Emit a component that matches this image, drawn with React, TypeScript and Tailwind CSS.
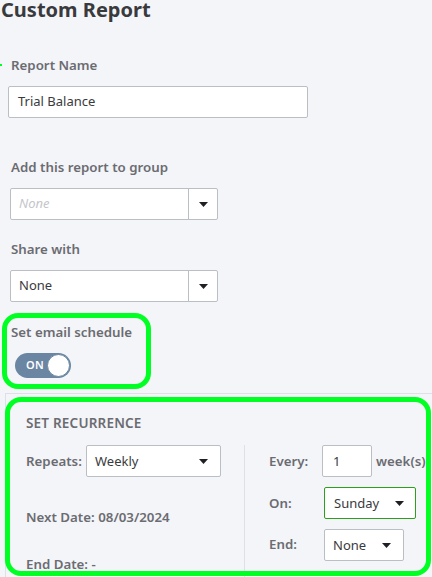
import React from "react";

const Arrow = () => (
  <svg width="9" height="5" viewBox="0 0 9 5" className="block">
    <path d="M0 0 L9 0 L4.5 5 Z" fill="#1f2024" />
  </svg>
);

const lbl = "text-[13.3px] leading-[20px] font-semibold";

export default function App() {
  return (
    <div
      className="relative w-[432px] h-[577px] overflow-hidden bg-[#f4f5f8] text-[#6b6c72]"
      style={{ fontFamily: '"Noto Sans", "Open Sans", sans-serif' }}
    >
      <div className="text-[20px] leading-[20px] font-bold text-[#393a3d] pl-[1px]">
        Custom Report
      </div>

      <div className={`mt-[35px] pl-[11px] ${lbl}`}>Report Name</div>
      <div className="mt-[11px] ml-[8px] w-[300px] h-[32px] bg-white border border-[#babec5] rounded-[2px] flex items-center pl-[9px] text-[13px] text-[#393a3d]">
        Trial Balance
      </div>

      <div className={`mt-[39px] pl-[11px] ${lbl}`}>Add this report to group</div>
      <div className="mt-[11px] ml-[10px] w-[208px] h-[32px] bg-white border border-[#babec5] rounded-[2px] flex">
        <div className="flex-1 flex items-center pl-[8px] text-[13px] italic text-[#c4c6cb]">None</div>
        <div className="w-[29px] border-l border-[#babec5] flex items-center justify-center">
          <Arrow />
        </div>
      </div>

      <div className={`mt-[19px] pl-[11px] ${lbl}`}>Share with</div>
      <div className="mt-[11px] ml-[10px] w-[208px] h-[32px] bg-white border border-[#babec5] rounded-[2px] flex">
        <div className="flex-1 flex items-center pl-[8px] text-[13px] text-[#393a3d]">None</div>
        <div className="w-[29px] border-l border-[#babec5] flex items-center justify-center">
          <Arrow />
        </div>
      </div>

      <div className={`mt-[20px] pl-[11px] ${lbl}`}>Set email schedule</div>
      <div className="mt-[11px] ml-[15px] w-[56px] h-[25px] rounded-full bg-[#6a86a3] flex items-center justify-between pl-[11px] pr-[1px]">
        <span className="text-[11px] font-semibold text-white tracking-[0.3px]">ON</span>
        <span className="w-[23px] h-[23px] rounded-full bg-white border border-[#6a86a3]" />
      </div>

      <div className="mt-[15px] ml-[5px] border-l border-t border-[#dde0e6] pt-[20px] pl-[20px] h-[200px]">
        <div className="text-[13.5px] leading-[18px] font-semibold text-[#6b6c72] tracking-[0.2px]">SET RECURRENCE</div>
        <div className="mt-[13px] flex">
          <div className="w-[218px]">
            <div className="flex items-start">
              <div className={`w-[60px] pt-[6px] ${lbl}`}>Repeats:</div>
              <div className="w-[135px] h-[32px] bg-white border border-[#babec5] rounded-[2px] flex items-center justify-between pl-[8px] pr-[12px] text-[13px] text-[#393a3d]">
                <span className="pt-[2px]">Weekly</span>
                <Arrow />
              </div>
            </div>
            <div className={`mt-[30px] ${lbl}`}>Next Date: 08/03/2024</div>
            <div className={`mt-[27px] ${lbl}`}>End Date: -</div>
          </div>
          <div className="border-l border-[#dde0e6] pl-[24px] h-[140px]">
            <div className="flex items-start">
              <div className={`w-[53px] pt-[6px] ${lbl}`}>Every:</div>
              <div className="w-[50px] h-[32px] bg-white border border-[#babec5] rounded-[2px] flex items-center pl-[10px] text-[13px] text-[#393a3d]">
                <span className="pt-[2px]">1</span>
              </div>
              <div className={`ml-[4px] pt-[6px] whitespace-nowrap ${lbl}`}>week(s)</div>
            </div>
            <div className="mt-[10px] flex items-start">
              <div className={`w-[55px] pt-[6px] ${lbl}`}>On:</div>
              <div className="w-[92px] h-[32px] bg-white border border-[#2ca01c] rounded-[2px] flex items-center justify-between pl-[9px] pr-[11px] text-[13px] text-[#393a3d]">
                <span className="pt-[2px]">Sunday</span>
                <Arrow />
              </div>
            </div>
            <div className="mt-[10px] flex items-start">
              <div className={`w-[55px] pt-[5px] ${lbl}`}>End:</div>
              <div className="w-[80px] h-[32px] bg-white border border-[#babec5] rounded-[2px] flex items-center justify-between pl-[8px] pr-[12px] text-[13px] text-[#393a3d]">
                <span className="pt-[2px]">None</span>
                <Arrow />
              </div>
            </div>
          </div>
        </div>
      </div>

      {/* annotation overlays */}
      <div className="absolute left-[0px] top-[64px] w-[2px] h-[2px] bg-[#00ff22]" />
      <div className="absolute left-[2px] top-[313px] w-[149px] h-[76px] border-[5px] border-[#00ff22] rounded-[16px] pointer-events-none" />
      <div className="absolute left-[5px] top-[397px] w-[426px] h-[179px] border-[5px] border-[#00ff22] rounded-[16px] pointer-events-none" />
    </div>
  );
}
